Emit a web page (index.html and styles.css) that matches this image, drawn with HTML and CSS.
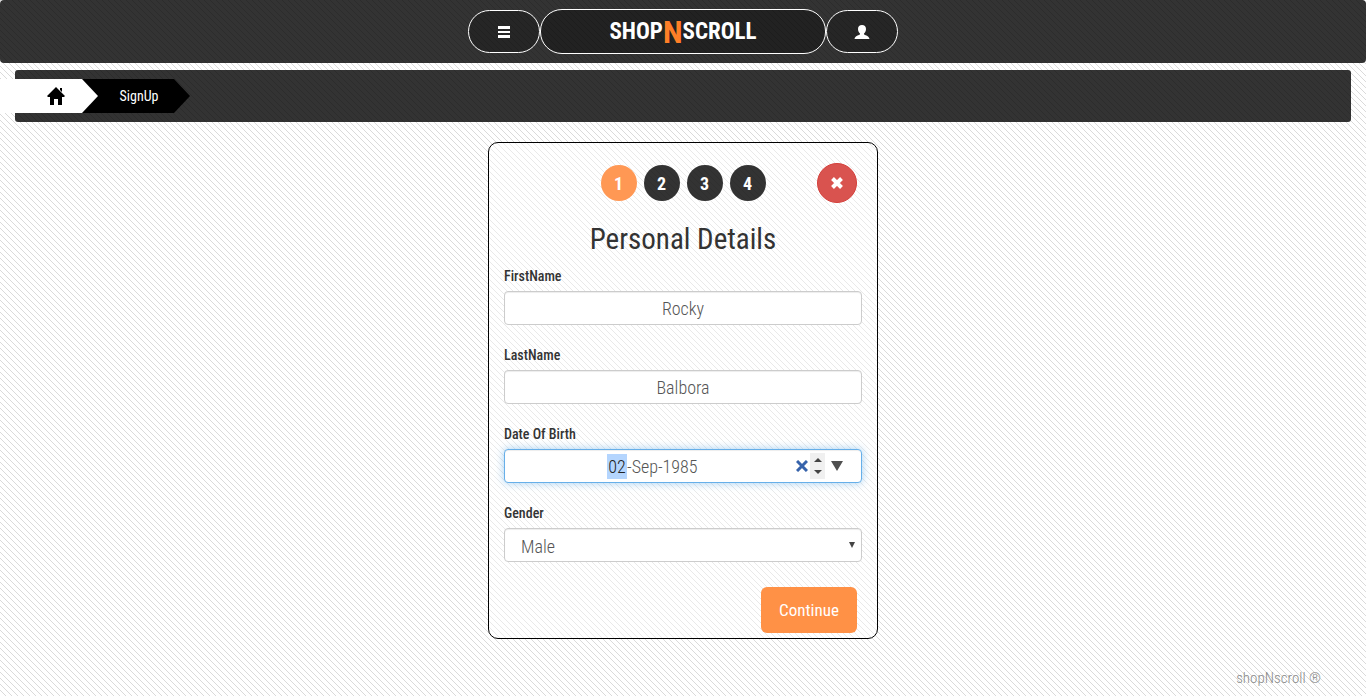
FILE: index.html
```html
<!DOCTYPE html>
<html lang="en">
<head>
<meta charset="utf-8">
<title>shopNscroll - SignUp</title>
<link rel="stylesheet" href="styles.css">
</head>
<body>
<header class="topbar">
  <button class="pill" type="button" aria-label="Menu">
    <svg width="12" height="12" viewBox="0 0 12 12" shape-rendering="crispEdges"><path fill="#fff" d="M0 0h12v3H0zM0 5h12v2H0zM0 9h12v3H0z"/></svg>
  </button>
  <a class="pill brand" href="#"><span>SHOP</span><span class="brand-n">N</span><span>SCROLL</span></a>
  <button class="pill" type="button" aria-label="Account">
    <svg width="16" height="14" viewBox="0 0 16 14"><path fill="#fff" d="M8 0c2.500 0 4 1.500 4 4 0 2-1 3.500-2 4.500v1c2 1 5 1.500 5.500 4.500H.5C1 11 4 10.500 6 9.500v-1C5 7.500 4 6 4 4c0-2.500 1.500-4 4-4z"/></svg>
  </button>
</header>
<nav class="crumbs" aria-label="Breadcrumb">
  <a class="crumb home" href="#" aria-label="Home">
    <svg width="20" height="18" viewBox="0 0 20 18"><path fill="#000" d="M10 0l9 9-1 1h-2v8h-4v-6H8v6H4v-8H2l-1-1zM14 1h2v4l-2-2z"/></svg>
  </a>
  <a class="crumb current" href="#">SignUp</a>
</nav>
<main class="card">
  <form>
    <div class="steps">
      <ol class="dots">
        <li class="dot active">1</li>
        <li class="dot">2</li>
        <li class="dot">3</li>
        <li class="dot">4</li>
      </ol>
      <button class="close" type="button" aria-label="Close">
        <svg width="14" height="14" viewBox="0 0 14 14"><path d="M2.500 2.500l9 9M11.500 2.500l-9 9" stroke="#fff" stroke-width="4"/></svg>
      </button>
    </div>
    <h1 class="title">Personal Details</h1>
    <div class="field">
      <label for="first">FirstName</label>
      <input class="control" id="first" type="text" value="Rocky">
    </div>
    <div class="field">
      <label for="last">LastName</label>
      <input class="control" id="last" type="text" value="Balbora">
    </div>
    <div class="field">
      <label for="dob-day">Date Of Birth</label>
      <div class="control date">
        <input class="day" id="dob-day" type="text" value="02"><input class="rest" type="text" aria-label="Month and year" value="-Sep-1985">
        <div class="tools">
          <button type="button" aria-label="Clear"><svg width="12" height="12" viewBox="0 0 12 12"><path d="M1 1l10 10M11 1L1 11" stroke="#3763ab" stroke-width="3"/></svg></button>
          <button class="spin" type="button" aria-label="Change value"><svg width="15" height="26" viewBox="0 0 15 26"><path fill="#444" d="M4 9l4-4 4 4zM4 17l4 4 4-4z"/></svg></button>
          <button type="button" aria-label="Open calendar"><svg width="12" height="10" viewBox="0 0 12 10"><path fill="#505050" d="M0 0h12L6 10z"/></svg></button>
        </div>
      </div>
    </div>
    <div class="field">
      <label for="gender">Gender</label>
      <select class="control gender" id="gender"><option>Male</option><option>Female</option></select>
    </div>
    <div class="actions"><button class="continue" type="submit">Continue</button></div>
  </form>
</main>
<footer class="footer">shopNscroll ®</footer>
</body>
</html>
```
FILE: styles.css
```css
* { box-sizing: border-box; }
body {
  margin: 0;
  min-height: 100vh;
  display: flex;
  flex-direction: column;
  font: 14px/20px "Roboto Condensed", "Liberation Sans Narrow", "Liberation Sans", sans-serif;
  color: #333;
  background: #fff url("data:image/svg+xml,%3Csvg xmlns='http://www.w3.org/2000/svg' width='6' height='6' shape-rendering='crispEdges'%3E%3Cpath fill='%23dadada' d='M0 0h1v1H0zM1 1h1v1H1zM2 2h1v1H2zM3 3h1v1H3zM4 4h1v1H4zM5 5h1v1H5z'/%3E%3C/svg%3E");
}
button { padding: 0; border: 0; background: none; font: inherit; cursor: pointer; }
svg { display: block; }
.topbar {
  display: flex;
  justify-content: center;
  align-items: center;
  height: 63px;
  border-radius: 4px;
  background: rgba(0, 0, 0, 0.8);
}
.pill {
  display: flex;
  justify-content: center;
  align-items: center;
  width: 72px;
  height: 43px;
  border: 1px solid #fff;
  border-radius: 22px;
  background: rgba(0, 0, 0, 0.24);
}
.pill.brand {
  width: 286px;
  height: 45px;
  background: rgba(0, 0, 0, 0.32);
  color: #fff;
  font-size: 23px;
  font-weight: 700;
  line-height: 32px;
  text-decoration: none;
}
.brand-n { color: #ff7f27; font-size: 32px; }
.crumbs {
  display: flex;
  align-items: center;
  height: 52px;
  margin: 7px 15px 0;
  border-radius: 3px;
  background: rgba(0, 0, 0, 0.8);
}
.crumb {
  display: flex;
  align-items: center;
  justify-content: center;
  height: 34px;
  color: #fff;
  text-decoration: none;
}
.home {
  z-index: 1;
  width: 98px;
  margin-left: -15px;
  padding-left: 14px;
  background: #fff;
  clip-path: polygon(0 0, 82px 0, 100% 50%, 82px 100%, 0 100%);
}
.current {
  width: 108px;
  margin-left: -16px;
  padding-left: 6px;
  background: #000;
  clip-path: polygon(0 0, 92px 0, 100% 50%, 92px 100%, 0 100%);
}
.card {
  width: 390px;
  max-width: 100%;
  margin: 20px auto 0;
  padding: 20px 15px 5px;
  border: 1px solid #000;
  border-radius: 10px;
  background: rgba(255, 255, 255, 0.4);
}
.steps { display: grid; grid-template-columns: 1fr auto 1fr; align-items: center; padding-right: 5px; }
.dots { grid-column: 2; display: flex; gap: 7px; margin: 0; padding: 0 0 0 5px; list-style: none; }
.dot {
  width: 36px;
  height: 36px;
  border-radius: 50%;
  background: rgba(0, 0, 0, 0.8);
  color: #fff;
  font-size: 18px;
  font-weight: 700;
  line-height: 37px;
  text-align: center;
}
.dot.active { background: #ff9854; }
.close {
  justify-self: end;
  display: grid;
  place-items: center;
  width: 40px;
  height: 40px;
  border: 1px solid #d43f3a;
  border-radius: 50%;
  background: #d9534f;
}
.title { margin: 19px 0 10px; font-size: 29px; font-weight: 400; line-height: 34px; text-align: center; }
.field { margin-bottom: 20px; }
.field label { display: block; margin-bottom: 5px; line-height: 20px; font-weight: 500; }
.control {
  display: block;
  width: 100%;
  height: 34px;
  padding: 1px 12px 0;
  border: 1px solid #ccc;
  border-radius: 4px;
  background: #fff;
  box-shadow: inset 0 1px 1px rgba(0, 0, 0, 0.075);
  color: #555;
  font: inherit;
  font-size: 18px;
  font-weight: 300;
  text-align: center;
}
.date {
  display: flex;
  align-items: center;
  justify-content: flex-end;
  padding: 0 18px 0 102px;
  border-color: #66afe9;
  box-shadow: inset 0 1px 1px rgba(0, 0, 0, 0.075), 0 0 8px rgba(102, 175, 233, 0.6);
}
.date input { padding: 0; border: 0; background: none; color: #555; font: inherit; height: 25px; }
.date .day { width: 20px; background: #b4d5fe; color: #222; text-align: center; }
.date .rest { flex: 1; min-width: 0; }
.tools { display: flex; align-items: center; gap: 2px; }
.tools .spin { margin-right: 4px; background: #f0f0f0; }
.gender {
  appearance: none;
  padding: 4px 16px 0;
  text-align: left;
  background: #fff url("data:image/svg+xml,%3Csvg xmlns='http://www.w3.org/2000/svg' width='6' height='6'%3E%3Cpath fill='%23444' d='M0 0h6L3 6z'/%3E%3C/svg%3E") no-repeat right 6px center;
}
.actions { display: flex; justify-content: flex-end; padding: 5px 5px 0 0; }
.continue {
  width: 96px;
  height: 46px;
  border-radius: 6px;
  background: #ff9146;
  color: #fff;
  font-size: 17px;
  font-weight: 400;
}
.footer { margin: auto 45px 8px; text-align: right; font-size: 15px; font-weight: 300; color: #888; }
```
